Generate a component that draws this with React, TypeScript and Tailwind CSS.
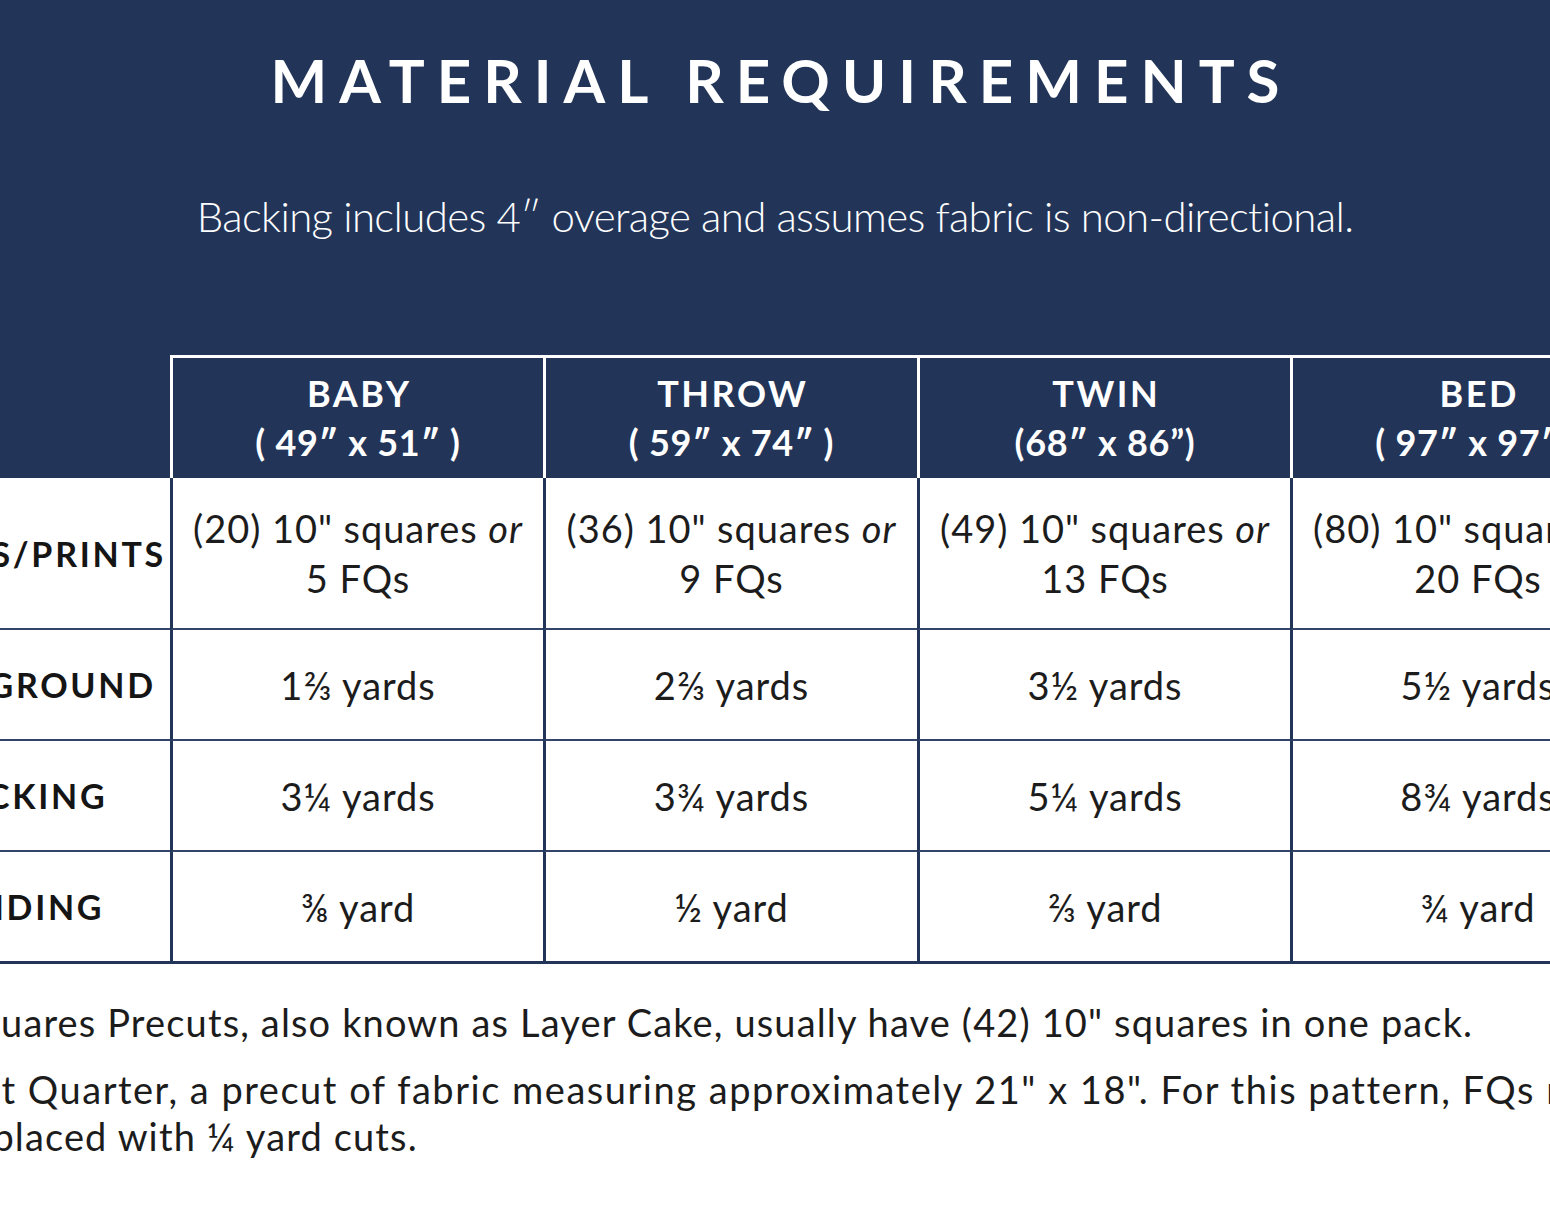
import React from "react";

const headers = [
  ["BABY", "( 49″ x 51″ )"],
  ["THROW", "( 59″ x 74″ )"],
  ["TWIN", "(68″ x 86”)"],
  ["BED", "( 97″ x 97″ )"],
];

type Row = { label: string; h: string; last?: boolean; cells: React.ReactNode[] };

const sq = (n: string, fq: string) => (
  <>
    <span>
      ({n}) 10" squares <em className="italic">or</em>
    </span>
    <span>{fq} FQs</span>
  </>
);

const rows: Row[] = [
  {
    label: "SOLIDS/PRINTS",
    h: "h-[152px]",
    cells: [sq("20", "5"), sq("36", "9"), sq("49", "13"), sq("80", "20")],
  },
  { label: "BACKGROUND", h: "h-[111px]", cells: ["1⅔ yards", "2⅔ yards", "3½ yards", "5½ yards"] },
  { label: "BACKING", h: "h-[111px]", cells: ["3¼ yards", "3¾ yards", "5¼ yards", "8¾ yards"] },
  { label: "BINDING", h: "h-[112px]", last: true, cells: ["⅜ yard", "½ yard", "⅔ yard", "¾ yard"] },
];

export default function App() {
  return (
    <div
      className="w-[1550px] h-[1205px] overflow-hidden bg-white"
      style={{ fontFamily: "Lato, 'Open Sans', sans-serif" }}
    >
      <div className="bg-[#223559] pt-[50px]">
        <h1 className="text-center text-white font-bold text-[60px] leading-none tracking-[0.2em] pl-[0.2em]">
          MATERIAL REQUIREMENTS
        </h1>
        <p className="mt-[85px] text-center text-white font-light text-[42px] leading-none tracking-[-0.015em]">
          Backing includes 4″ overage and assumes fabric is non-directional.
        </p>
        <div className="mt-[118px] ml-[-130px] grid grid-cols-[300px_373px_374px_373px_373px] w-max">
          <div />
          {headers.map(([a, b]) => (
            <div
              key={a}
              className="h-[123px] border-t-[3px] border-l-[3px] border-white flex flex-col items-center justify-center text-white font-bold text-[36px] leading-[49px] whitespace-nowrap"
            >
              <span className="tracking-[0.07em] pl-[0.07em]">{a}</span>
              <span className="tracking-[0.02em]">{b}</span>
            </div>
          ))}
        </div>
      </div>

      <div className="ml-[-130px] grid grid-cols-[300px_373px_374px_373px_373px] w-max">
        {rows.map((r) => (
          <React.Fragment key={r.label}>
            <div
              className={`${r.h} pl-[4px] flex items-center justify-center font-bold text-[34px] tracking-[0.08em] text-[#151515] whitespace-nowrap ${
                r.last ? "border-b-[3px] border-[#223559]" : "border-b-2 border-[#33446a]"
              }`}
            >
              {r.label}
            </div>
            {r.cells.map((c, i) => (
              <div
                key={i}
                className={`${r.h} border-l-[3px] border-l-[#223559] flex flex-col items-center justify-center text-[38px] leading-[50px] tracking-[0.025em] text-[#1c1c1c] whitespace-nowrap ${
                  r.last ? "border-b-[3px] border-b-[#223559]" : "border-b-2 border-b-[#33446a]"
                }`}
              >
                {c}
              </div>
            ))}
          </React.Fragment>
        ))}
      </div>

      <div className="ml-[-43px] mt-[35px] text-[38px] leading-[47px] tracking-[0.03em] text-[#1c1c1c] whitespace-nowrap">
        <p>Squares Precuts, also known as Layer Cake, usually have (42) 10" squares in one pack.</p>
        <p className="mt-[20px]">
          <span className="pl-[4px] tracking-[0.04em]">
            Fat Quarter, a precut of fabric measuring approximately 21" x 18". For this pattern, FQs may be
          </span>
          <br />
          replaced with ¼ yard cuts.
        </p>
      </div>
    </div>
  );
}
